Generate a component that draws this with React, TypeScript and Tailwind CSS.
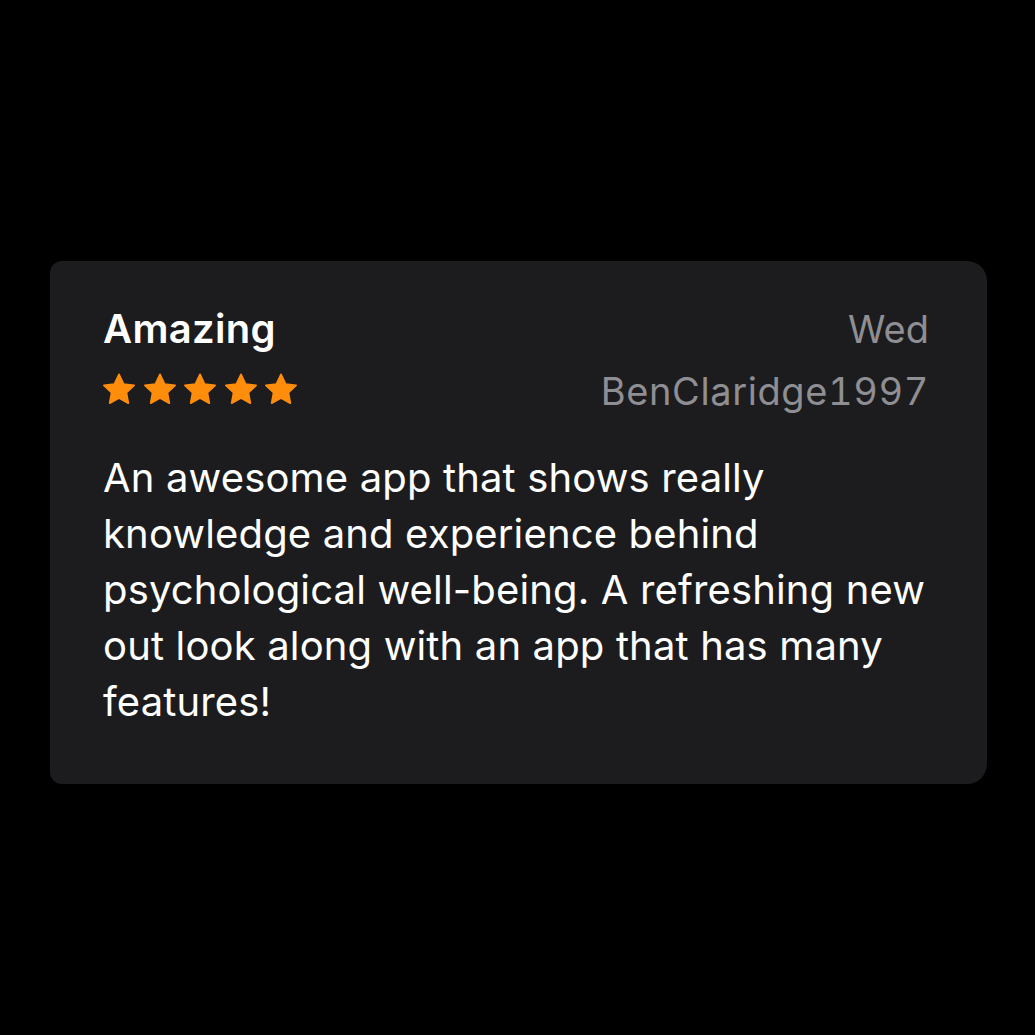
export default function App() {
  const stars = [0, 1, 2, 3, 4];

  return (
    <div
      className="w-[1035px] h-[1035px] bg-black pt-[261px] pl-[50px]"
      style={{ fontFamily: "Inter, 'Noto Sans', sans-serif" }}
    >
      <div className="w-[937px] bg-[#1c1c1e] rounded-l-[12px] rounded-r-[20px] pt-[45px] pl-[53px] pr-[58px] pb-[54px]">
        {/* Header: title + stars, date + author */}
        <div className="flex items-start justify-between">
          <div className="flex flex-col">
            <h2 className="text-[40px] leading-[46px] font-semibold tracking-[0.3px] text-white">Amazing</h2>
            <div className="flex items-center gap-[4.5px] mt-[20px] -ml-[2px]">
              {stars.map((s) => (
                <svg key={s} width="36" height="34" viewBox="0 0 24 23" className="text-[#ff8d0c]">
                  <path
                    d="M12 1.6l3.1 6.6 7.1.9-5.2 4.9 1.3 7.1L12 17.6l-6.3 3.5 1.3-7.1-5.2-4.9 7.1-.9z"
                    fill="currentColor"
                    stroke="currentColor"
                    strokeWidth="1.2"
                    strokeLinejoin="round"
                  />
                </svg>
              ))}
            </div>
          </div>
          <div className="flex flex-col items-end text-[#8e8e93] text-[38px]">
            <span className="leading-[46px]">Wed</span>
            <span className="leading-[46px] mt-[16px] tabular-nums tracking-[0.6px]">BenClaridge1997</span>
          </div>
        </div>

        {/* Review body */}
        <p className="mt-[36px] text-white text-[40px] leading-[56px] tracking-[0.15px]">
          An awesome app that shows really knowledge and experience behind psychological well-being. A
          refreshing new out look along with an app that has many features!
        </p>
      </div>
    </div>
  );
}
